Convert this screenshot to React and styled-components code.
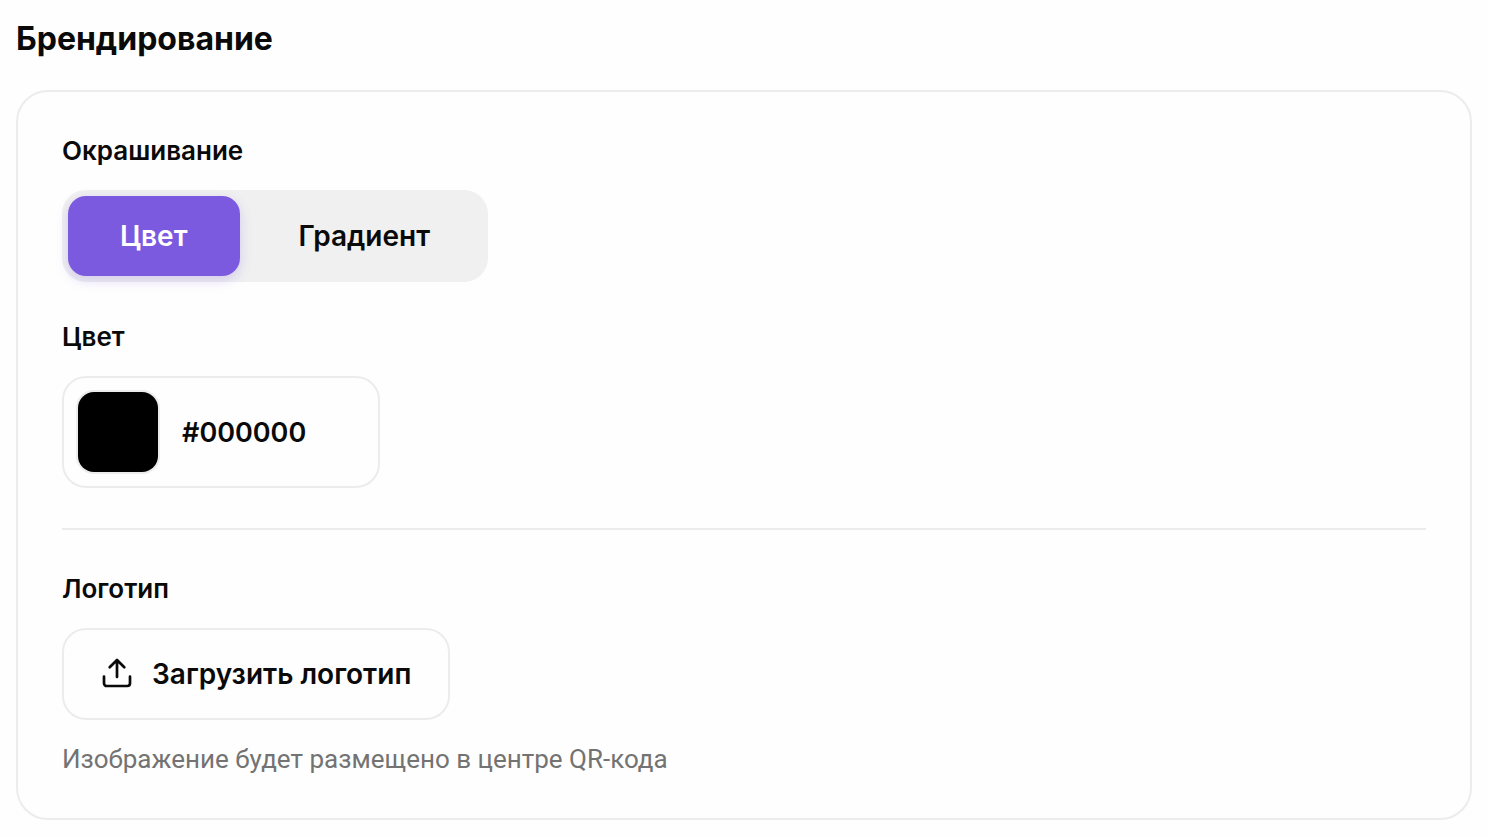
import React, { useState } from "react"
import styled, { createGlobalStyle } from "styled-components"

const App = () => {
  const [mode, setMode] = useState("color")
  const [color, setColor] = useState("#000000")

  return (
    <Page>
      <GlobalStyle />
      <Title>Брендирование</Title>
      <Card>
        <Field>
          <Label as="span" id="fill-label">Окрашивание</Label>
          <Segmented role="group" aria-labelledby="fill-label">
            <Segment
              type="button"
              $active={mode === "color"}
              aria-pressed={mode === "color"}
              onClick={() => setMode("color")}
            >
              Цвет
            </Segment>
            <Segment
              type="button"
              $active={mode === "gradient"}
              aria-pressed={mode === "gradient"}
              onClick={() => setMode("gradient")}
            >
              Градиент
            </Segment>
          </Segmented>
        </Field>
        <Field>
          <Label htmlFor="color-value" id="color-label">Цвет</Label>
          <ColorBox>
            <Swatch
              type="color"
              aria-labelledby="color-label"
              value={color}
              onChange={e => setColor(e.target.value)}
            />
            <ColorValue
              id="color-value"
              type="text"
              value={color}
              onChange={e => setColor(e.target.value)}
            />
          </ColorBox>
        </Field>
        <Divider />
        <Field>
          <Label as="span" id="logo-label">Логотип</Label>
          <UploadButton type="button" aria-describedby="logo-label logo-hint">
            <UploadIcon />
            Загрузить логотип
          </UploadButton>
          <Hint id="logo-hint">Изображение будет размещено в центре QR-кода</Hint>
        </Field>
      </Card>
    </Page>
  )
}

export default App

const UploadIcon = () => (
  <Icon viewBox="0 0 32 32" aria-hidden="true">
    <path d="M16 19V2.200M8.700 9.300L16 2l7.300 7.300" />
    <path d="M3 18.600V25.300A2.700 2.700 0 0 0 5.700 28H26.300A2.700 2.700 0 0 0 29 25.300V18.600" />
  </Icon>
)

const GlobalStyle = createGlobalStyle`
  * {
    box-sizing: border-box;
  }

  body {
    margin: 0;
    background: #fefefe;
    color: #0a0a0a;
    font-family: Inter, "Liberation Sans", sans-serif;
    -webkit-font-smoothing: antialiased;
  }

  button,
  input {
    font: inherit;
    color: inherit;
  }
`

const Page = styled.main`
  padding: 16px;
`

const Title = styled.h1`
  margin: 0 0 28px;
  font-size: 32px;
  font-weight: 700;
  line-height: 46px;
`

const Card = styled.section`
  display: flex;
  flex-direction: column;
  gap: 40px;
  padding: 44px;
  border: 2px solid #ececec;
  border-radius: 32px;
`

const Field = styled.div`
  display: flex;
  flex-direction: column;
  align-items: flex-start;
  gap: 24px;
`

const Label = styled.label`
  font-size: 26px;
  font-weight: 600;
  line-height: 30px;
`

const Segmented = styled.div`
  display: flex;
  gap: 7px;
  padding: 6px;
  border-radius: 24px;
  background: #f0f0f0;
`

const Segment = styled.button`
  height: 80px;
  padding: 0 52px;
  border: 0;
  border-radius: 18px;
  background: ${props => (props.$active ? "#7b5ae0" : "transparent")};
  box-shadow: ${props => (props.$active ? "0 4px 12px rgba(123, 90, 224, 0.25)" : "none")};
  color: ${props => (props.$active ? "#fff" : "inherit")};
  font-size: 28px;
  font-weight: 600;
  cursor: pointer;
`

const ColorBox = styled.div`
  display: flex;
  align-items: center;
  gap: 22px;
  width: 318px;
  max-width: 100%;
  padding: 12px;
  border: 2px solid #ececec;
  border-radius: 24px;
`

const Swatch = styled.input`
  flex: none;
  width: 84px;
  height: 84px;
  padding: 0;
  border: 2px solid #ececec;
  border-radius: 18px;
  background: none;
  overflow: hidden;
  appearance: none;
  cursor: pointer;

  &::-webkit-color-swatch-wrapper {
    padding: 0;
  }

  &::-webkit-color-swatch {
    border: 0;
  }
`

const ColorValue = styled.input`
  flex: 1;
  min-width: 0;
  padding: 0;
  border: 0;
  outline: 0;
  background: none;
  font-size: 27px;
  font-weight: 600;
`

const Divider = styled.hr`
  width: 100%;
  margin: 0 0 4px;
  border: 0;
  border-top: 2px solid #ececec;
`

const UploadButton = styled.button`
  display: flex;
  align-items: center;
  gap: 19px;
  height: 92px;
  padding: 0 37px;
  border: 2px solid #ececec;
  border-radius: 24px;
  background: none;
  font-size: 28px;
  font-weight: 600;
  cursor: pointer;
`

const Icon = styled.svg`
  width: 32px;
  height: 32px;
  fill: none;
  stroke: currentColor;
  stroke-width: 2.7;
  stroke-linecap: round;
  stroke-linejoin: round;
`

const Hint = styled.p`
  margin: 0;
  color: #737373;
  font-family: Roboto, Inter, sans-serif;
  font-size: 26px;
  line-height: 30px;
`
